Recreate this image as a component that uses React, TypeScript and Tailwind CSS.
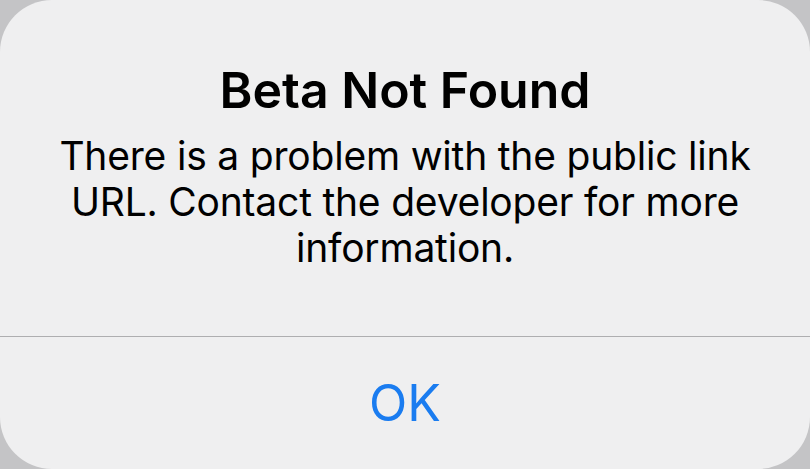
const App = () => {
  return (
    <div className="w-[810px] h-[469px] bg-[#c4c4c6] overflow-hidden" style={{ fontFamily: "Inter, 'Noto Sans', sans-serif" }}>
      <div className="w-full h-full bg-[#efeff0] rounded-[52px] flex flex-col">
        <div className="h-[336px] flex flex-col items-center pt-[61px] px-10">
          <h1 className="text-[50px] leading-[58px] font-semibold text-black">Beta Not Found</h1>
          <p className="mt-[14px] text-[39px] leading-[46px] text-black text-center tracking-[-0.2px]">
            There is a problem with the public link URL. Contact the developer for more information.
          </p>
        </div>
        <div className="h-px bg-[#aeaeb0]" />
        <button className="flex-1 flex items-center justify-center text-[50px] text-[#1a7cf0]">OK</button>
      </div>
    </div>
  );
};

export default App;
